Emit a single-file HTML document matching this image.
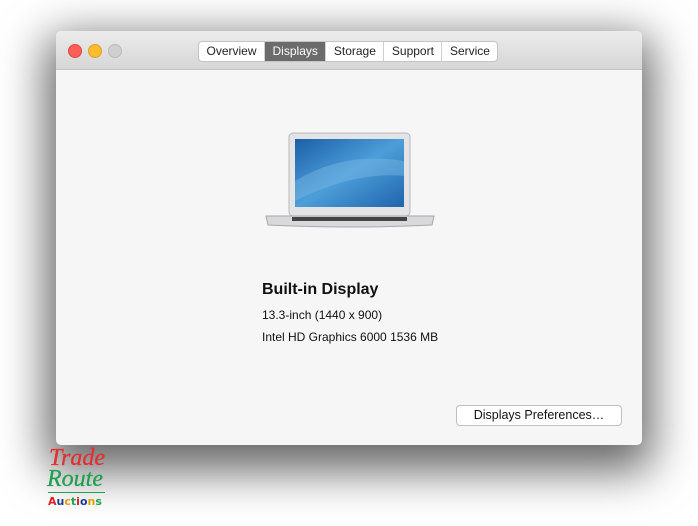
<!DOCTYPE html>
<html><head><style>
body{margin:0;width:698px;height:526px;background:#fff;position:relative;overflow:hidden;font-family:"Liberation Sans",sans-serif;}
.win{position:absolute;left:56px;top:31px;width:586px;height:414px;border-radius:5px;background:#f6f6f6;box-shadow:0 16px 45px 10px rgba(0,0,0,.6);overflow:hidden;}
.tb{height:38px;background:linear-gradient(#ececec,#d6d6d6);border-bottom:1px solid #c2c2c2;position:relative;}
.dot{position:absolute;top:13px;width:12px;height:12px;border-radius:50%;}
.tabs{position:absolute;left:142px;top:10px;height:19px;display:flex;border:1px solid #c4c4c4;border-radius:4px;background:#fff;overflow:hidden;font-size:12px;}
.tabs div{padding:0 7.5px;line-height:19px;color:#222;border-right:1px solid #d0d0d0;}
.tabs div:last-child{border:0}
.tabs .a{background:#6b6b6b;color:#fff;}
.t{position:absolute;color:#111;}
.btn{position:absolute;left:400px;top:374px;width:164px;height:19px;border:1px solid #bfbfbf;border-radius:4px;background:#fff;font-size:12.5px;text-align:center;line-height:19px;color:#111;}
</style></head><body>
<div class="win">
<div class="tb">
<div class="dot" style="left:12px;background:#fc5f57;border:0.5px solid #de4a42"></div>
<div class="dot" style="left:32px;background:#fdbc2e;border:0.5px solid #dea124"></div>
<div class="dot" style="left:52px;background:#cfcfcf;border:0.5px solid #bbb"></div>
<div class="tabs"><div>Overview</div><div class="a">Displays</div><div>Storage</div><div>Support</div><div>Service</div></div>
</div>
<svg style="position:absolute;left:208px;top:100px" width="172" height="100">
<defs><linearGradient id="s" x1="0" y1="0" x2="1" y2="1"><stop offset="0" stop-color="#1b5fa8"/><stop offset=".5" stop-color="#4d9ed8"/><stop offset="1" stop-color="#1f64ad"/></linearGradient></defs>
<rect x="25" y="2" width="121" height="83" rx="4" fill="#e4e4e6" stroke="#b8b8bc"/>
<rect x="31" y="8" width="109" height="68" fill="url(#s)"/>
<path d="M31 50 Q80 20 140 30 L140 45 Q90 40 31 70Z" fill="#79b8e6" opacity=".45"/>
<path d="M2 85 L170 85 L168 94 Q86 98 4 94Z" fill="#d9d9db" stroke="#a8a8aa"/>
<rect x="28" y="86" width="115" height="4" fill="#444"/>
</svg>
<div class="t" style="left:206px;top:250px;font-size:16px;font-weight:bold">Built-in Display</div>
<div class="t" style="left:206px;top:277px;font-size:12px">13.3-inch (1440 x 900)</div>
<div class="t" style="left:206px;top:299px;font-size:12px">Intel HD Graphics 6000 1536 MB</div>
<div class="btn">Displays Preferences…</div>
</div>
<div style="position:absolute;left:49px;top:448px;font-family:'Liberation Serif',serif;font-style:italic;font-size:24px;line-height:21px;color:#e03030;-webkit-text-stroke:.3px #e03030">Trade</div>
<div style="position:absolute;left:47px;top:469px;font-family:'Liberation Serif',serif;font-style:italic;font-size:24px;line-height:21px;color:#20a050;-webkit-text-stroke:.3px #20a050">Route</div>
<div style="position:absolute;left:48px;top:492px;width:57px;border-top:1px solid #20a050"></div>
<div style="position:absolute;left:48px;top:495px;font-family:'DejaVu Sans',sans-serif;font-size:11px;font-weight:bold;letter-spacing:0"><span style="color:#e02020">A</span><span style="color:#1a3a9a">u</span><span style="color:#e0a000">c</span><span style="color:#20a050">t</span><span style="color:#e02020">i</span><span style="color:#1a3a9a">o</span><span style="color:#e0a000">n</span><span style="color:#20a050">s</span></div>
</body></html>
